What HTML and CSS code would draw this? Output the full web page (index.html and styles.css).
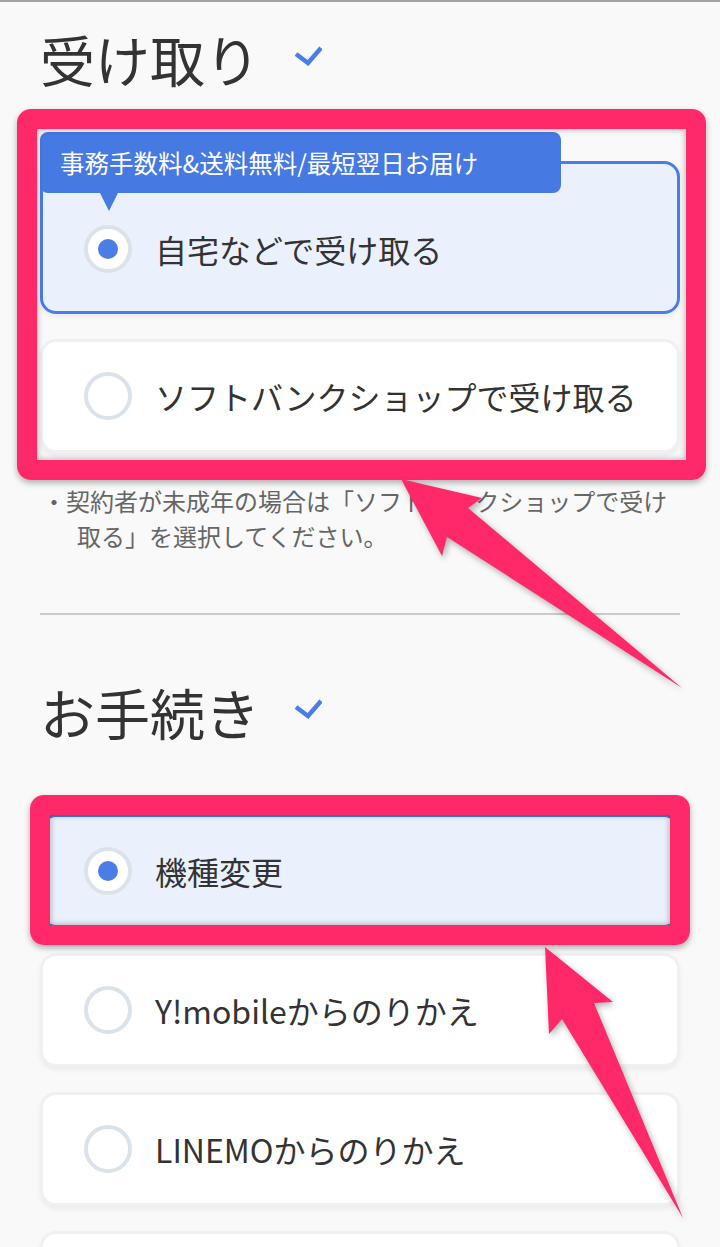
FILE: index.html
```html
<!DOCTYPE html>
<html lang="ja">
<head>
    <meta charset="UTF-8">
    <meta name="viewport" content="width=device-width, initial-scale=1.0">
    <title>受け取り・お手続き</title>
    <link rel="stylesheet" href="styles.css">
</head>
<body>
    <div class="page">
        <section class="step">
            <h2 class="step-title">受け取り
                <svg class="check" width="28" height="20" viewBox="0 0 28 20"><polyline points="2,8 14,17 27,2" /></svg>
            </h2>
            <div class="options">
                <label class="option selected has-badge">
                    <span class="badge">事務手数料&amp;送料無料/最短翌日お届け</span>
                    <span class="radio"></span>
                    <span class="option-text">自宅などで受け取る</span>
                </label>
                <label class="option">
                    <span class="radio"></span>
                    <span class="option-text">ソフトバンクショップで受け取る</span>
                </label>
            </div>
            <p class="note">・契約者が未成年の場合は「ソフトバンクショップで受け取る」を選択してください。</p>
        </section>

        <hr class="divider">

        <section class="step">
            <h2 class="step-title">お手続き
                <svg class="check" width="28" height="20" viewBox="0 0 28 20"><polyline points="2,8 14,17 27,2" /></svg>
            </h2>
            <div class="options">
                <label class="option selected">
                    <span class="radio"></span>
                    <span class="option-text">機種変更</span>
                </label>
                <label class="option">
                    <span class="radio"></span>
                    <span class="option-text">Y!mobileからのりかえ</span>
                </label>
                <label class="option">
                    <span class="radio"></span>
                    <span class="option-text">LINEMOからのりかえ</span>
                </label>
                <!-- 画面外に続くカード -->
                <div class="option option-cut"></div>
            </div>
        </section>
    </div>

    <!-- 注釈（ピンクの枠と矢印） -->
    <div class="mark mark-1"></div>
    <div class="mark mark-2"></div>
    <svg class="arrows" width="720" height="1247" viewBox="0 0 720 1247">
        <polygon points="401,479 482,498 468,508 682,688 447,537 442,556" />
        <polygon points="545,947 613,1002 594,1003 683,1218 562,1019 549,1034" />
    </svg>
</body>
</html>
```

FILE: styles.css
```css
* {
    box-sizing: border-box;
}

html, body {
    height: 1247px;
    overflow: hidden;
}

body {
    margin: 0;
    border-top: 2px solid #a3a3a3;
    background-color: #f9f9f9;
    color: #333;
    font-family: "Noto Sans CJK JP", "Noto Sans", sans-serif;
    position: relative;
}

.page {
    padding: 0 40px;
}

.step-title {
    margin: 23px 0 0;
    font-size: 55px;
    font-weight: 400;
    line-height: 66px;
    display: flex;
    align-items: center;
}

.check {
    margin-left: 34px;
    margin-top: -4px;
}

.check polyline {
    fill: none;
    stroke: #4a7de6;
    stroke-width: 4.5;
}

.options {
    margin-top: 70px;
    display: flex;
    flex-direction: column;
    gap: 25px;
}

.option {
    position: relative;
    display: flex;
    align-items: center;
    gap: 23px;
    padding: 30px 20px 30px 41px;
    background-color: #fff;
    border: 3px solid #f0f0f0;
    border-radius: 16px;
    box-shadow: 0 3px 5px rgba(0, 0, 0, 0.06);
}

.option.selected {
    background-color: #ebf1fc;
    border-color: #4a7de6;
}

.option.has-badge {
    padding-top: 61px;
    padding-bottom: 38px;
}

.option-cut {
    height: 114px;
}

.radio {
    flex: none;
    width: 48px;
    height: 48px;
    border: 4px solid #dce2e9;
    border-radius: 50%;
    background-color: #fff;
    display: flex;
    justify-content: center;
    align-items: center;
}

.option.selected .radio::after {
    content: "";
    width: 20px;
    height: 20px;
    border-radius: 50%;
    background-color: #4a7de6;
}

.option-text {
    font-size: 32px;
    line-height: 40px;
    white-space: nowrap;
}

.badge {
    position: absolute;
    top: -32px;
    left: -3px;
    width: 521px;
    height: 61px;
    padding-left: 20px;
    display: flex;
    align-items: center;
    background-color: #4779e2;
    color: #fff;
    font-size: 24.5px;
    white-space: nowrap;
    border-radius: 8px;
}

.badge::after {
    content: "";
    position: absolute;
    top: 100%;
    left: 60px;
    border-left: 9px solid transparent;
    border-right: 9px solid transparent;
    border-top: 18px solid #4779e2;
}

.note {
    margin: 30px 0 0;
    padding-left: 37px;
    text-indent: -35px;
    font-size: 24px;
    line-height: 35px;
    color: #666;
}

.divider {
    margin: 60px 0 0;
    border: none;
    border-top: 2px solid #cacaca;
}

.divider + .step .step-title {
    margin-top: 63px;
}

/* annotation overlay */
.mark {
    position: absolute;
    border: 20px solid #ff2868;
    border-radius: 14px;
    box-shadow: 0 3px 6px rgba(0, 0, 0, 0.3), inset 0 0 6px rgba(0, 0, 0, 0.35);
}

.mark-1 {
    left: 17px;
    top: 107px;
    width: 689px;
    height: 371px;
}

.mark-2 {
    left: 30px;
    top: 793px;
    width: 660px;
    height: 150px;
}

.arrows {
    position: absolute;
    top: -2px;
    left: 0;
    filter: drop-shadow(2px 3px 3px rgba(0, 0, 0, 0.3));
}

.arrows polygon {
    fill: #ff2868;
}
```
